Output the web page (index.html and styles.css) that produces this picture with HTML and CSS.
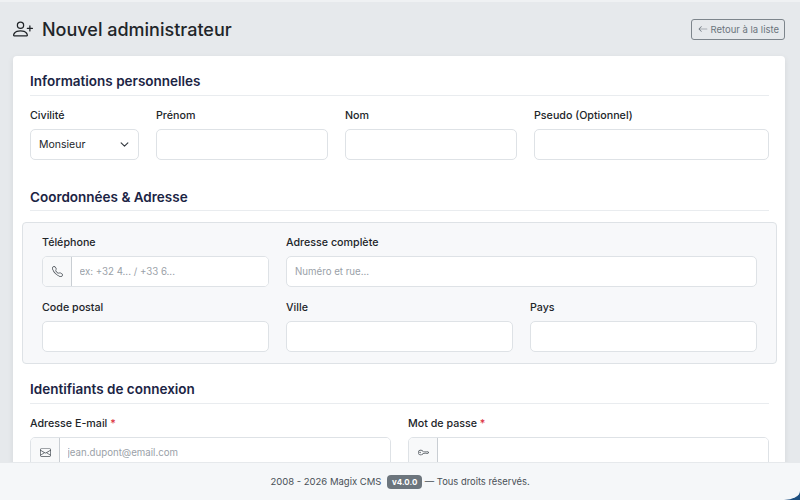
FILE: index.html
```html
<!DOCTYPE html>
<html lang="fr">
<head>
    <meta charset="utf-8">
    <title>Nouvel administrateur</title>
    <link rel="stylesheet" href="styles.css">
</head>
<body>
    <div class="page">
        <div class="page-head">
            <h1 class="page-title">
                <svg class="title-icon" viewBox="0 0 16 16" fill="currentColor">
                    <path d="M6 8a3 3 0 1 0 0-6 3 3 0 0 0 0 6Zm2-3a2 2 0 1 1-4 0 2 2 0 0 1 4 0Zm4 8c0 1-1 1-1 1H1s-1 0-1-1 1-4 6-4 6 3 6 4Zm-1-.004c-.001-.246-.154-.986-.832-1.664C9.516 10.68 8.289 10 6 10c-2.29 0-3.516.68-4.168 1.332-.678.678-.83 1.418-.832 1.664h10Z"/>
                    <path d="M13.5 5a.5.5 0 0 1 .5.5V7h1.5a.5.5 0 0 1 0 1H14v1.5a.5.5 0 0 1-1 0V8h-1.5a.5.5 0 0 1 0-1H13V5.500a.5.5 0 0 1 .5-.5Z"/>
                </svg>
                Nouvel administrateur
            </h1>
            <a class="btn-back" href="#">
                <svg class="back-icon" viewBox="0 0 16 16" fill="currentColor">
                    <path d="M15 8a.5.5 0 0 0-.5-.5H2.707l3.147-3.146a.5.5 0 1 0-.708-.708l-4 4a.5.5 0 0 0 0 .708l4 4a.5.5 0 0 0 .708-.708L2.707 8.500H14.500A.5.5 0 0 0 15 8Z"/>
                </svg>
                Retour à la liste
            </a>
        </div>

        <form class="card">
            <h2 class="section-title">Informations personnelles</h2>
            <div class="row row-first">
                <div class="col-2">
                    <label class="field-label">Civilité</label>
                    <div class="select-box">
                        <span>Monsieur</span>
                        <svg class="chevron" viewBox="0 0 16 16"><path d="m2 5 6 6 6-6" fill="none" stroke="#343a40" stroke-width="2" stroke-linecap="round" stroke-linejoin="round"/></svg>
                    </div>
                </div>
                <div class="col-3">
                    <label class="field-label">Prénom</label>
                    <input class="field" type="text">
                </div>
                <div class="col-3">
                    <label class="field-label">Nom</label>
                    <input class="field" type="text">
                </div>
                <div class="col-4">
                    <label class="field-label">Pseudo (Optionnel)</label>
                    <input class="field" type="text">
                </div>
            </div>

            <h2 class="section-title title-contact">Coordonnées &amp; Adresse</h2>
            <div class="address-box">
                <div class="row row-address">
                    <div class="col-4">
                        <label class="field-label">Téléphone</label>
                        <div class="input-group">
                            <span class="addon">
                                <svg class="addon-icon" viewBox="0 0 16 16" fill="currentColor"><path d="M3.654 1.328a.678.678 0 0 0-1.015-.063L1.605 2.300c-.483.484-.661 1.169-.45 1.770a17.570 17.570 0 0 0 4.168 6.608 17.570 17.570 0 0 0 6.608 4.168c.601.211 1.286.033 1.770-.45l1.034-1.034a.678.678 0 0 0-.063-1.015l-2.307-1.794a.678.678 0 0 0-.580-.122l-2.190.547a1.745 1.745 0 0 1-1.657-.459L5.482 8.062a1.745 1.745 0 0 1-.460-1.657l.548-2.190a.678.678 0 0 0-.122-.580L3.654 1.328ZM1.884.511a1.745 1.745 0 0 1 2.612.163L6.290 2.980c.329.423.445.974.315 1.494l-.547 2.190a.678.678 0 0 0 .178.643l2.457 2.457a.678.678 0 0 0 .644.178l2.189-.547a1.745 1.745 0 0 1 1.494.315l2.306 1.794c.829.645.905 1.870.163 2.611l-1.034 1.034c-.740.740-1.846 1.065-2.877.702a18.630 18.630 0 0 1-7.010-4.420 18.630 18.630 0 0 1-4.420-7.009c-.362-1.030-.037-2.137.703-2.877L1.885.511Z"/></svg>
                            </span>
                            <input class="group-input" type="text" placeholder="ex: +32 4... / +33 6...">
                        </div>
                    </div>
                    <div class="col-8">
                        <label class="field-label">Adresse complète</label>
                        <input class="field" type="text" placeholder="Numéro et rue...">
                    </div>
                    <div class="col-4">
                        <label class="field-label">Code postal</label>
                        <input class="field" type="text">
                    </div>
                    <div class="col-4">
                        <label class="field-label">Ville</label>
                        <input class="field" type="text">
                    </div>
                    <div class="col-4">
                        <label class="field-label">Pays</label>
                        <input class="field" type="text">
                    </div>
                </div>
            </div>

            <h2 class="section-title title-login">Identifiants de connexion</h2>
            <div class="row row-login">
                <div class="col-6">
                    <label class="field-label">Adresse E-mail <span class="required">*</span></label>
                    <div class="input-group">
                        <span class="addon">
                            <svg class="addon-icon" viewBox="0 0 16 16" fill="currentColor"><path d="M0 4a2 2 0 0 1 2-2h12a2 2 0 0 1 2 2v8a2 2 0 0 1-2 2H2a2 2 0 0 1-2-2V4Zm2-1a1 1 0 0 0-1 1v.217l7 4.200 7-4.200V4a1 1 0 0 0-1-1H2Zm13 2.383-4.708 2.825L15 11.105V5.383Zm-.034 6.876-5.640-3.471L8 9.583l-1.326-.795-5.640 3.470A1 1 0 0 0 2 13h12a1 1 0 0 0 .966-.741ZM1 11.105l4.708-2.897L1 5.383v5.722Z"/></svg>
                        </span>
                        <input class="group-input" type="text" placeholder="jean.dupont@email.com">
                    </div>
                </div>
                <div class="col-6">
                    <label class="field-label">Mot de passe <span class="required">*</span></label>
                    <div class="input-group">
                        <span class="addon">
                            <svg class="addon-icon" viewBox="0 0 16 16" fill="currentColor"><path d="M0 8a4 4 0 0 1 7.465-2H14a.500.500 0 0 1 .354.146l1.500 1.500a.500.500 0 0 1 0 .708l-1.500 1.500a.500.500 0 0 1-.708 0L13 9.207l-.646.647a.500.500 0 0 1-.708 0L11 9.207l-.646.647a.500.500 0 0 1-.708 0L9 9.207l-.646.647A.500.500 0 0 1 8 10h-.535A4 4 0 0 1 0 8Zm4-3a3 3 0 1 0 2.712 4.285A.500.500 0 0 1 7.163 9h.630l.853-.854a.500.500 0 0 1 .708 0l.646.647.646-.647a.500.500 0 0 1 .708 0l.646.647.646-.647a.500.500 0 0 1 .708 0l.646.647.793-.793-1-1h-6.630a.500.500 0 0 1-.451-.285A3 3 0 0 0 4 5Z"/><path d="M4 8a1 1 0 1 1-2 0 1 1 0 0 1 2 0Z"/></svg>
                        </span>
                        <input class="group-input" type="password">
                    </div>
                </div>
            </div>
        </form>
    </div>

    <div class="corner"></div>
    <footer class="footer">
        <span>2008 - 2026 Magix CMS</span>
        <span class="version">v4.0.0</span>
        <span class="rights">— Tous droits réservés.</span>
    </footer>
</body>
</html>
```

FILE: styles.css
```css
* {
    box-sizing: border-box;
}

html, body {
    height: 500px;
    margin: 0;
    overflow: hidden;
}

body {
    position: relative;
    background-color: #e6e9ec;
    border-top: 2px solid #eff1f3;
    font-family: Inter, "Liberation Sans", sans-serif;
    color: #212529;
}

.page {
    padding: 0 15px 0 13px;
}

.page-head {
    display: flex;
    justify-content: space-between;
    align-items: center;
    height: 54px;
}

.page-title {
    display: flex;
    align-items: center;
    gap: 9px;
    margin: 0;
    font-size: 18px;
    font-weight: 500;
}

.title-icon {
    width: 20px;
    height: 20px;
}

.btn-back {
    display: flex;
    align-items: center;
    gap: 2px;
    height: 21px;
    padding: 0 5px 0 6px;
    border: 1px solid #7d858c;
    border-radius: 3px;
    font-size: 9.5px;
    color: #6c757d;
    text-decoration: none;
}

.back-icon {
    width: 10px;
    height: 10px;
}

.card {
    height: 480px;
    padding: 17px 16px 0 17px;
    background-color: #fff;
    border-radius: 4px;
    box-shadow: 0 2px 6px rgba(0, 0, 0, .08);
}

.section-title {
    height: 23px;
    margin: 0;
    border-bottom: 1px solid #e9ecef;
    font-size: 13.5px;
    font-weight: 600;
    line-height: 16px;
    color: #1b2444;
}

.title-contact {
    margin-top: 29px;
    height: 22px;
}

.title-login {
    margin-top: 17px;
    height: 23px;
}

.row {
    display: grid;
    grid-template-columns: repeat(12, 1fr);
    column-gap: 17px;
}

.row-first {
    margin-top: 12px;
}

.row-address {
    row-gap: 13px;
}

.row-login {
    margin-top: 12px;
}

.col-2 { grid-column: span 2; }
.col-3 { grid-column: span 3; }
.col-4 { grid-column: span 4; }
.col-6 { grid-column: span 6; }
.col-8 { grid-column: span 8; }

.address-box {
    margin: 11px -8px 0 -8px;
    padding: 12px 19px 11px;
    background-color: #f7f8fa;
    border: 1px solid #dee2e6;
    border-radius: 4px;
}

.field-label {
    display: block;
    margin-bottom: 6px;
    font-size: 10.7px;
    font-weight: 500;
    line-height: 15px;
    color: #212529;
}

.required {
    color: #dc3545;
}

.field, .select-box, .input-group {
    width: 100%;
    height: 31px;
    background-color: #fff;
    border: 1px solid #dee2e6;
    border-radius: 5px;
}

.field {
    display: block;
    padding: 0 8px;
    font-family: inherit;
    font-size: 9.7px;
    outline: none;
}

.select-box {
    display: flex;
    justify-content: space-between;
    align-items: center;
    padding: 0 9px 0 8px;
    font-size: 10.5px;
}

.chevron {
    width: 9px;
    height: 9px;
}

.input-group {
    display: flex;
    overflow: hidden;
}

.addon {
    display: flex;
    justify-content: center;
    align-items: center;
    width: 29px;
    flex-shrink: 0;
    background-color: #f8f9fa;
    border-right: 1px solid #c9ced3;
    color: #495057;
}

.addon-icon {
    width: 11px;
    height: 11px;
}

.group-input {
    flex: 1;
    min-width: 0;
    padding: 0 8px 0 7.5px;
    border: 0;
    font-family: inherit;
    font-size: 9.7px;
    outline: none;
}

::placeholder {
    color: #9aa1a8;
    opacity: 1;
}

.footer {
    position: absolute;
    left: 0;
    right: 0;
    top: 460px;
    height: 38px;
    display: flex;
    justify-content: center;
    align-items: center;
    gap: 6px;
    background-color: #f5f7f9;
    border-top: 1px solid #e6e9ec;
    border-bottom-right-radius: 16px 9px;
    font-size: 9.5px;
    color: #495057;
}

.corner {
    position: absolute;
    right: 0;
    bottom: 0;
    width: 20px;
    height: 20px;
    background-color: #1c4f80;
}

.version {
    padding: 2px 4.5px;
    background-color: #6c757d;
    border-radius: 4px;
    font-size: 8px;
    font-weight: 700;
    color: #fff;
}

.rights {
    margin-left: -3px;
    font-size: 9.4px;
}
```
